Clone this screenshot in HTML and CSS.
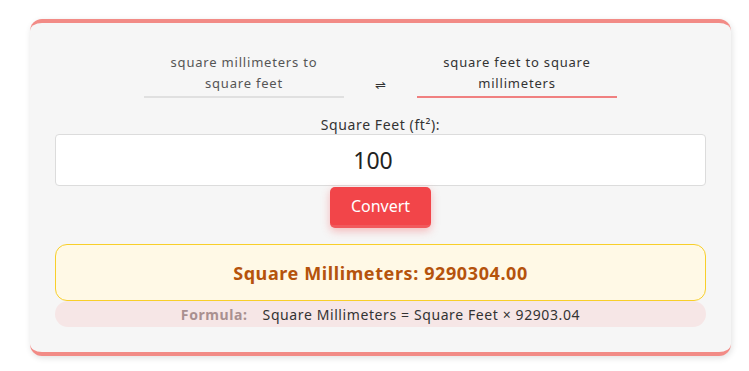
FILE: index.html
```html
<!DOCTYPE html>
<html lang="en">
<head>
  <meta charset="UTF-8" />
  <title>Square Feet Converter</title>
  <link rel="stylesheet" href="styles.css">
</head>
<body>
  <div class="card">
    <div class="tabs">
      <div class="tab">square millimeters to square feet</div>
      <div class="swap">&#8652;</div>
      <div class="tab active">square feet to square millimeters</div>
    </div>

    <label class="field-label" for="valueInput">Square Feet (ft²):</label>
    <input id="valueInput" class="value-input" type="text" value="100" />
    <button class="convert-btn" type="button">Convert</button>

    <div class="result">Square Millimeters: 9290304.00</div>
    <div class="formula">
      <span class="formula-label">Formula:</span>
      <span>Square Millimeters = Square Feet × 92903.04</span>
    </div>
  </div>
</body>
</html>
```

FILE: styles.css
```css
body {
  margin: 0;
  padding: 19px 18px 15px 30px;
  background: #fff;
  font-family: 'Noto Sans', 'Open Sans', Arial, sans-serif;
  color: #333;
}
.card {
  background: #f6f6f6;
  border-top: 4px solid #f28b86;
  border-bottom: 4px solid #f28b86;
  border-radius: 12px;
  box-shadow: 1px 2px 6px rgba(0, 0, 0, 0.12);
  padding: 29px 25px 25px 25px;
  display: flex;
  flex-direction: column;
  align-items: center;
}
.tabs {
  display: flex;
  align-items: flex-end;
  gap: 24px;
}
.tab {
  width: 200px;
  box-sizing: border-box;
  padding: 0 12px 2px 12px;
  text-align: center;
  font-size: 13px;
  line-height: 21px;
  letter-spacing: 0.8px;
  color: #555;
  border-bottom: 2px solid #e0e0e0;
}
.tab.active {
  color: #333;
  border-bottom-color: #f08080;
}
.swap {
  width: 25px;
  text-align: center;
  font-size: 13px;
  line-height: 21px;
  color: #333;
  padding-bottom: 2px;
}
.field-label {
  margin-top: 17px;
  font-size: 14px;
  line-height: 19px;
  letter-spacing: 0.6px;
  color: #333;
}
.value-input {
  margin-top: 0;
  width: 100%;
  box-sizing: border-box;
  height: 52px;
  padding: 0 15px 0 0;
  border: 1px solid #dcdcdc;
  border-radius: 4px;
  background: #fff;
  text-align: center;
  font-family: inherit;
  font-size: 23px;
  color: #222;
  outline: none;
}
.convert-btn {
  margin-top: 1px;
  width: 101px;
  height: 41px;
  background: #f24549;
  color: #fff;
  border: none;
  border-bottom: 3px solid #f1595c;
  border-radius: 5px;
  font-family: inherit;
  font-size: 16px;
  box-shadow: 0 3px 8px rgba(242, 69, 73, 0.35);
  cursor: pointer;
}
.result {
  margin-top: 16px;
  width: 100%;
  box-sizing: border-box;
  height: 57px;
  display: flex;
  align-items: center;
  justify-content: center;
  background: #fff9e6;
  border: 1px solid #f8cf2a;
  border-radius: 12px;
  color: #b5530c;
  font-size: 18px;
  font-weight: 700;
  letter-spacing: 0.6px;
}
.formula {
  width: 100%;
  height: 26px;
  display: flex;
  align-items: center;
  justify-content: center;
  gap: 15px;
  background: #f6e6e6;
  border-radius: 13px;
  font-size: 14px;
  letter-spacing: 0.6px;
  color: #333;
}
.formula-label {
  font-weight: 700;
  color: #a99090;
}
```
